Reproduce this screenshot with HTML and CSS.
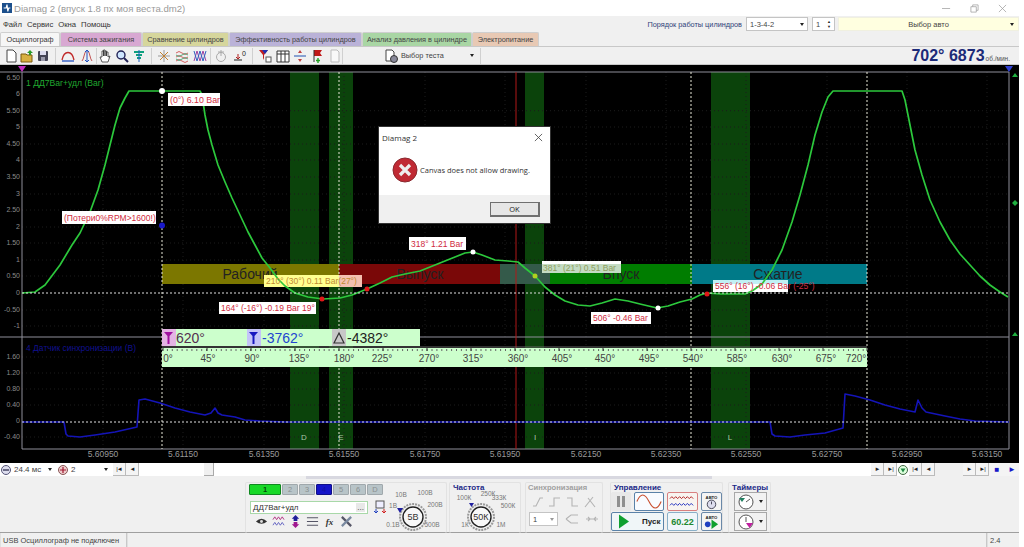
FILE: index.html
```html
<!DOCTYPE html>
<html lang="ru">
<head>
<meta charset="utf-8">
<title>Diamag 2</title>
<link rel="stylesheet" href="styles.css">
</head>
<body>
<div class="app">
  <header class="titlebar">
    <svg class="appicon" viewBox="0 0 12 12"><rect width="12" height="12" fill="#1c4f8c"/><path d="M2 6h3l1-4 1 8 1-4h2" fill="none" stroke="#fff" stroke-width="1.4"/></svg>
    <span class="title">Diamag 2 (впуск 1.8 пх моя веста.dm2)</span>
    <div class="winbtns">
      <svg viewBox="0 0 10 10"><path d="M0 5h9" class="wb"/></svg>
      <svg viewBox="0 0 10 10"><path d="M1 3h6v6H1zM3 3V1h6v6H7" class="wb"/></svg>
      <svg viewBox="0 0 10 10"><path d="M1 1l8 8M9 1l-8 8" class="wb"/></svg>
    </div>
  </header>

  <div class="menurow">
    <nav class="menu"><span>Файл</span><span>Сервис</span><span>Окна</span><span>Помощь</span></nav>
    <div class="orderbox">
      <span class="orderlabel">Порядок работы цилиндров</span>
      <div class="sel sel-order"><span>1-3-4-2</span><i class="arr"></i></div>
      <div class="sel sel-spin"><span>1</span><b class="spin">▲<br>▼</b></div>
      <div class="sel sel-auto"><span>Выбор авто</span><i class="arr"></i></div>
    </div>
  </div>

  <div class="tabs">
    <div class="tab tab-osc">Осциллограф</div>
    <div class="tab tab-ign">Система зажигания</div>
    <div class="tab tab-cmp">Сравнение цилиндров</div>
    <div class="tab tab-eff">Эффективность работы цилиндров</div>
    <div class="tab tab-prs">Анализ давления в цилиндре</div>
    <div class="tab tab-pwr">Электропитание</div>
  </div>

  <div class="toolbar">
    <div class="tbg g2">
      <svg class="ti" viewBox="0 0 14 14"><path d="M3 1h6l3 3v9H3z" fill="#fff" stroke="#444"/></svg>
      <svg class="ti" viewBox="0 0 14 14"><path d="M1 5h5l1 1h5v7H1z" fill="#d8b040" stroke="#7a5a10"/><path d="M7 4l3-3 3 3h-2v2H9V4z" fill="#2a9a2a"/></svg>
      <svg class="ti" viewBox="0 0 14 14"><rect x="2" y="2" width="10" height="10" fill="#445" rx="1"/><rect x="4" y="2" width="6" height="4" fill="#dde"/><rect x="5" y="8" width="4" height="4" fill="#99a"/></svg>
    </div>
    <i class="sep"></i>
    <div class="tbg g5">
      <svg class="ti" viewBox="0 0 14 14"><path d="M1 11C3 1 11 1 13 11" fill="none" stroke="#c02828" stroke-width="1.3"/><path d="M1 12h12" stroke="#2050c0" stroke-width="1.3"/></svg>
      <svg class="ti" viewBox="0 0 14 14"><path d="M2 12C4 10 4 4 6 2M12 12C10 10 10 4 8 2" fill="none" stroke="#c05050"/><path d="M7 1v12M5 3l2-2 2 2M5 11l2 2 2-2" fill="none" stroke="#2050c0"/></svg>
    </div>
    <i class="sep sep-t"></i>
    <div class="tbg g3">
      <svg class="ti" viewBox="0 0 14 14"><path d="M4 13L2 8l2 0V2h1.500v5V1H7v6V2h1.500v5-4H10v5l2-1-2 6z" fill="#fff" stroke="#333" stroke-width=".8"/></svg>
      <svg class="ti" viewBox="0 0 14 14"><circle cx="6" cy="6" r="4" fill="#cfe6ff" stroke="#225" stroke-width="1.400"/><path d="M9 9l4 4" stroke="#225" stroke-width="2"/></svg>
      <svg class="ti" viewBox="0 0 14 14"><path d="M2 3h10M4 6h6M5 9h4" stroke="#10a080" stroke-width="2"/><path d="M7 1v12" stroke="#2060c0"/></svg>
    </div>
    <i class="sep"></i>
    <div class="tbg g4">
      <svg class="ti" viewBox="0 0 14 14"><path d="M7 1v12M1 7h12" stroke="#999"/><path d="M3 3l8 8M11 3l-8 8" stroke="#c08030"/></svg>
      <svg class="ti" viewBox="0 0 14 14"><path d="M1 4q3-3 6 0t6 0M1 8q3-3 6 0t6 0M1 12q3-3 6 0t6 0" fill="none" stroke="#d05050" stroke-width=".9"/><path d="M1 6q3 3 6 0t6 0M1 10q3 3 6 0t6 0" fill="none" stroke="#40a070" stroke-width=".9"/></svg>
      <svg class="ti" viewBox="0 0 14 14"><path d="M1 12L4 2l3 10 3-10 3 10" fill="none" stroke="#a040a0"/><path d="M1 2l3 10 3-10 3 10 3-10" fill="none" stroke="#3060c0"/></svg>
    </div>
    <i class="sep sep-m"></i>
    <div class="tbg g5">
      <svg class="ti" viewBox="0 0 14 14"><circle cx="7" cy="8" r="4.500" fill="none" stroke="#aaa"/><path d="M7 1v6M4 3h6" stroke="#aaa"/></svg>
      <svg class="ti" viewBox="0 0 14 14"><path d="M1 11h8" stroke="#222"/><path d="M5 5v5M3 8l2 2 2-2" fill="none" stroke="#b02020"/><text x="9" y="7" class="tz">0</text></svg>
    </div>
    <i class="sep"></i>
    <div class="tbg g3h">
      <svg class="ti" viewBox="0 0 14 14"><path d="M1 1h9L6 6v5L5 9V6z" fill="#c02020"/><path d="M4 1h6L7 5z" fill="#2030b0"/><rect x="8" y="8" width="5" height="5" fill="#fff" stroke="#555"/></svg>
      <svg class="ti" viewBox="0 0 14 14"><path d="M1 2h12v11H1zM1 5h12M5 2v11M9 2v11" fill="#fff" stroke="#333"/></svg>
      <svg class="ti" viewBox="0 0 14 14"><path d="M1 7h12" stroke="#2050b0"/><path d="M5 4h4L7 1zM5 10h4l-2 3z" fill="#c04040"/></svg>
      <svg class="ti" viewBox="0 0 14 14"><path d="M3 1h8l-2 3 2 3H3z" fill="#c01818"/><path d="M3 1v12" stroke="#333"/><path d="M7 9v5M5 11.500h4" stroke="#20a020" stroke-width="1.400"/></svg>
      <svg class="ti" viewBox="0 0 14 14"><path d="M3 1h6l2 2v10H3z" fill="#f8f8f8" stroke="#bbb"/></svg>
    </div>
    <i class="sep sep-e"></i>
    <div class="testbtn">
      <svg class="ti" viewBox="0 0 14 14"><path d="M2 1h6l2 2v9H2z" fill="#fff" stroke="#444"/><circle cx="10" cy="10" r="3.500" fill="#889" stroke="#333"/></svg>
      <span>Выбор теста</span>
      <i class="arr"></i>
    </div>
    <i class="sep sep-e"></i>
    <div class="readout"><b>702° 6873</b><small>об./мин.</small></div>
  </div>

  <svg class="chart" viewBox="0 65 1019 398" width="1019" height="398">
    <g class="bands">
      <rect x="290" y="72" width="29" height="377"/><rect x="329" y="72" width="24" height="377"/>
      <rect x="525" y="72" width="19" height="377"/><rect x="711" y="72" width="39" height="377"/>
    </g>
    <path class="grid" d="M22 110.700H1009M22 127H1009M22 144H1009M22 160H1009M22 177H1009M22 194H1009M22 210H1009M22 227H1009M22 243H1009M22 260H1009M22 276H1009M22 310H1009M22 326H1009M22 357H1009M22 373H1009M22 389H1009M22 405H1009M22 437H1009M103 72V449M183 72V449M264 72V449M344 72V449M425 72V449M505 72V449M586 72V449M666 72V449M746 72V449M827 72V449M907 72V449M987 72V449"/>

    <path class="frame" d="M0 72H1009M22 72V337M0 337H1009M22 337V449H1009M1009 72V449"/>
    <path class="marker-m" d="M18 66h8l-4 6z"/>
    <path class="marker-b" d="M1005 66h8l-4 6z"/>
    <path class="tri-g" d="M1012 77l3-4 3 4z"/>
    <path class="tri-g" d="M1015 200l3 3-3 3-3-3z"/>
    <path class="tri-g" d="M1012 336l3-4 3 4z"/>

    <g class="yl">
      <text x="20" y="80">6.50</text><text x="20" y="96">6</text><text x="20" y="113">5.50</text><text x="20" y="129">5</text><text x="20" y="146">4.50</text><text x="20" y="162">4</text><text x="20" y="179">3.50</text><text x="20" y="196">3</text><text x="20" y="212">2.50</text><text x="20" y="229">2</text><text x="20" y="245">1.50</text><text x="20" y="262">1</text><text x="20" y="278">0.50</text><text x="20" y="295">0</text><text x="20" y="312">-0.50</text><text x="20" y="328">-1</text>
      <text x="20" y="359">1.60</text><text x="20" y="375">1.20</text><text x="20" y="391">0.80</text><text x="20" y="407">0.40</text><text x="20" y="423">0</text><text x="20" y="439">-0.40</text>
    </g>
    <g class="xl">
      <text x="103" y="457">5.60950</text><text x="183" y="457">5.61150</text><text x="264" y="457">5.61350</text><text x="344" y="457">5.61550</text><text x="425" y="457">5.61750</text><text x="505" y="457">5.61950</text><text x="586" y="457">5.62150</text><text x="666" y="457">5.62350</text><text x="746" y="457">5.62550</text><text x="827" y="457">5.62750</text><text x="907" y="457">5.62950</text><text x="987" y="457">5.63150</text>
    </g>

    <text x="26" y="86" class="ch1">1 ДД7Bar+удл (Bar)</text>
    <text x="26" y="351" class="ch2">4 Датчик синхронизации (В)</text>

    <g class="tag">
      <rect x="264" y="275" width="98" height="12"/>
      <rect x="542" y="261" width="79" height="12"/>
      <rect x="713" y="280" width="75" height="12"/>
    </g>
    <g class="phases">
      <rect class="ph1" x="162" y="264" width="177" height="20"/>
      <rect class="ph2" x="339" y="264" width="161" height="20"/>
      <rect class="ph3" x="500" y="264" width="50" height="20"/>
      <rect class="ph4" x="550" y="264" width="142" height="20"/>
      <rect class="ph5" x="692" y="264" width="175" height="20"/>
      <text x="250" y="279">Рабочий</text><text x="420" y="279">Выпуск</text><text x="621" y="279">Впуск</text><text x="778" y="279">Сжатие</text>
    </g>
    <g class="tag-wash">
      <rect class="w1" x="264" y="275" width="75" height="12"/>
      <rect class="w2" x="339" y="275" width="23" height="12"/>
      <rect class="w3" x="542" y="264" width="79" height="9"/>
      <rect class="w4" x="713" y="280" width="75" height="4"/>
    </g>

    <path class="vdots" d="M162 72V449M339 72V449M691 72V449M867 72V449"/>
    <path class="redline" d="M516 72V449"/>

    <path class="curve1" d="M22 293L35 292L45 285L60 265L72 245L80 233L90 212L98 190L105 165L110 145L115 125L120 108L125 98L129 91L150 91L165 91L200 91L202 95L205 115L208 130L212 145L218 165L225 182L232 198L240 215L248 232L255 245L262 258L270 268L278 279L285 286L295 293L308 297L323 299L340 298L352 295L367 289L380 283L392 277L405 274L420 271L435 265L450 259L465 253L473 252L482 255L495 260L508 261L518 262L525 268L535 276L545 287L555 295L565 301L578 305L590 306L602 303L615 299L628 301L640 304L657 308L668 306L680 302L692 299L700 295L707 293L720 294L745 294L752 291L762 284L772 270L782 250L792 222L800 195L808 165L815 135L822 112L828 97L833 91L902 91L905 100L910 125L915 150L922 175L930 200L940 222L950 240L960 254L970 265L980 276L990 285L1000 292L1008 297"/>
    <path class="curve2" d="M22 422L64 422L66 434L68 436L80 437L95 435L115 432L137 427L139 400L145 399L160 403L175 408L190 412L205 415L211 413L215 408L218 413L222 415L235 417L245 420L260 421L285 422L770 422L772 434L775 436L790 437L805 435L825 433L843 428L845 394L855 396L870 400L885 405L900 409L915 412L918 400L922 408L926 412L945 416L960 419L975 421L1009 422"/>
    <path class="dots" d="M22 293H1009M22 422H1009"/>

    <g class="ruler">
      <rect x="162" y="329" width="258" height="17"/>
      <rect x="162" y="348" width="705" height="19"/>
      <path class="ruler-line" d="M162 347H867"/>
      <path class="ruler-ticks" d="M162 350H867"/>
      <path class="ruler-major" d="M163 351v-3M207 351v-3M251 351v-3M295 351v-3M339 351v-3M383 351v-3M427 351v-3M471 351v-3M515 351v-3M559 351v-3M603 351v-3M647 351v-3M691 351v-3M735 351v-3M779 351v-3M823 351v-3M867 351v-3"/>
      <rect class="f1" x="162" y="329" width="14" height="17"/>
      <path class="f1i" d="M164 332h9l-3.500 4v8h-2v-8z"/>
      <rect class="f2" x="247" y="329" width="14" height="17"/>
      <path class="f2i" d="M249 332h9l-3.500 4v8h-2v-8z"/>
      <rect class="f3" x="332" y="329" width="14" height="17"/>
      <path class="f3i" d="M339 333l5 10h-10z"/>
      <text x="176" y="343" class="v1">620°</text>
      <text x="262" y="343" class="v2">-3762°</text>
      <text x="347" y="343" class="v3">-4382°</text>
      <g class="deg">
        <text x="168" y="362">0°</text><text x="208" y="362">45°</text><text x="252" y="362">90°</text><text x="299" y="362">135°</text><text x="344" y="362">180°</text><text x="382" y="362">225°</text><text x="429" y="362">270°</text><text x="473" y="362">315°</text><text x="518" y="362">360°</text><text x="562" y="362">405°</text><text x="605" y="362">450°</text><text x="649" y="362">495°</text><text x="693" y="362">540°</text><text x="737" y="362">585°</text><text x="782" y="362">630°</text><text x="826" y="362">675°</text><text x="856" y="362">720°</text>
      </g>
    </g>

    <g class="bl"><text x="304" y="440">D</text><text x="341" y="440">E</text><text x="535" y="440">I</text><text x="730" y="440">L</text></g>

    <g class="tag">
      <rect x="168" y="93" width="52" height="13"/><text x="170" y="103" class="tag-l">(0°) 6.10 Bar</text>
      <rect x="62" y="211" width="94" height="13"/><text x="64" y="221">(Потери0%RPM&gt;1600!)</text>
      <rect x="409" y="237" width="57" height="13"/><text x="411" y="247">318° 1.21 Bar</text>
      <rect x="219" y="302" width="97" height="12"/><text x="221" y="311">164° (-16°) -0.19 Bar 19°</text>
      <rect x="591" y="312" width="60" height="12"/><text x="593" y="321">506° -0.46 Bar</text>
      <text x="266" y="284" class="tag-o">210° (30°) 0.11 Bar(27°)</text>
      <text x="543" y="271" class="tag-g">381° (21°) 0.51 Bar</text>
      <text x="715" y="289">556° (16°) -0.06 Bar (-25°)</text>
    </g>

    <circle class="dw" cx="162" cy="91" r="3"/><circle class="db" cx="162" cy="225.500" r="3"/>
    <circle class="dw" cx="473" cy="252" r="2.500"/><circle class="dw" cx="658" cy="308" r="2.500"/>
    <circle class="dr" cx="322" cy="299" r="2.500"/><circle class="dr" cx="367" cy="289" r="2.500"/><circle class="dr" cx="707" cy="294" r="2.500"/>
    <circle class="dy" cx="535" cy="276" r="2.500"/>
  </svg>

  <div class="navrow">
    <div class="navleft">
      <svg class="zi" viewBox="0 0 10 10"><circle cx="5" cy="5" r="4.500" fill="#dde" stroke="#557"/><path d="M2 5h6" stroke="#224" stroke-width="1.200"/></svg>
      <div class="navsel w-a"><span>24.4 мс</span><i class="arr"></i></div>
      <svg class="zi" viewBox="0 0 10 10"><circle cx="5" cy="5" r="4.500" fill="#ecc" stroke="#855"/><path d="M2 5h6M5 2v6" stroke="#a01830" stroke-width="1.200"/></svg>
      <div class="navsel w-b"><span>2</span><i class="arr"></i></div>
      <i class="nb">|◄</i><i class="nb">◄</i>
    </div>
    <div class="track"><div class="thumb"></div></div>
    <div class="navright">
      <i class="nb">►</i><i class="nb">►|</i>
      <svg class="zi" viewBox="0 0 10 10"><circle cx="5" cy="5" r="4.500" fill="#dfd" stroke="#464"/><path d="M2.500 3.500h5L5 7.500z" fill="#284"/></svg>
      <i class="nb">|◄</i><i class="nb">◄</i>
      <span class="gap"></span>
      <i class="nb">►</i><i class="nb">►|</i>
      <i class="nb nb-blue">■</i><i class="nb nb-blue">►</i>
    </div>
  </div>

  <section class="panel">
    <div class="splitter"><i class="dotbar"></i></div>
    <div class="groups">
      <div class="grp grp-ch">
        <div class="chleft">
          <div class="cyls">
            <span class="cy cy-1">1</span><span class="cy">2</span><span class="cy">3</span><span class="cy cy-4">4</span><span class="cy">5</span><span class="cy">6</span><span class="cy">D</span>
          </div>
          <div class="inrow">
            <div class="inp"><span>ДД7Bar+удл</span><em>...</em></div>
            <svg class="ti" viewBox="0 0 14 14"><rect x="3" y="1" width="8" height="7" fill="#eef" stroke="#555"/><path d="M3 9v4M1 11l2 2 2-2" fill="none" stroke="#2040c0"/><path d="M11 9v4M9 11l2 2 2-2" fill="none" stroke="#d02020"/></svg>
          </div>
          <div class="chicons">
            <svg class="ci" viewBox="0 0 14 14"><path d="M1 7q6-6 12 0-6 5-12 0z" fill="#333"/><circle cx="7" cy="7" r="1.600" fill="#ddd"/></svg>
            <svg class="ci" viewBox="0 0 14 14"><path d="M1 5l2-3 2 3 2-3 2 3 2-3 2 3" fill="none" stroke="#b03080"/><path d="M1 11l2-3 2 3 2-3 2 3 2-3 2 3" fill="none" stroke="#6060c0"/></svg>
            <svg class="ci" viewBox="0 0 14 14"><path d="M7 0l4 4H9v2.500H5V4H3z" fill="#20209a"/><path d="M7 14l4-4H9V7.500H5V10H3z" fill="#a01890"/></svg>
            <svg class="ci" viewBox="0 0 14 14"><path d="M1 3h12M1 7h12M1 11h12" stroke="#556" stroke-width="1.200"/></svg>
            <span class="fx">fx</span>
            <svg class="ci" viewBox="0 0 14 14"><path d="M2 2l10 10" stroke="#556" stroke-width="2.400"/><path d="M12 2L2 12" stroke="#7a8aa0" stroke-width="2.400"/></svg>
          </div>
        </div>
        <svg class="knob" viewBox="0 0 60 46">
          <text x="13" y="9">10В</text><text x="37" y="7">100В</text><text x="5" y="20">1В</text><text x="47" y="19">200В</text><text x="5" y="39">0.1В</text><text x="44" y="39">500В</text>
          <circle class="k-o" cx="25" cy="29" r="13"/><circle class="k-i" cx="25" cy="29" r="10"/>
          <path class="k-m" d="M9 20l6 0-3 5z"/>
          <text x="25" y="32" class="k-v">5В</text>
        </svg>
      </div>

      <div class="grp grp-f">
        <div class="gt">Частота</div>
        <svg class="knob knob-f" viewBox="0 0 70 40">
          <text x="13" y="13">100К</text><text x="37" y="9">250К</text><text x="48" y="13">333К</text><text x="57" y="21">500К</text><text x="14" y="40">1К</text><text x="50" y="40">1М</text>
          <circle class="k-o" cx="30" cy="30" r="13"/><circle class="k-i" cx="30" cy="30" r="10"/>
          <path class="k-m" d="M18 16l5 0-2.500 4z"/>
          <text x="30" y="33" class="k-v">50К</text>
        </svg>
      </div>

      <div class="grp grp-s">
        <div class="gt gt-off">Синхронизация</div>
        <div class="sync-a">
          <svg class="si" viewBox="0 0 14 14"><path d="M2 11h3l4-8h3" class="off"/></svg>
          <svg class="si" viewBox="0 0 14 14"><path d="M1 11h5V3h6" class="off"/></svg>
          <svg class="si" viewBox="0 0 14 14"><path d="M1 3h5v8h6" class="off"/></svg>
          <svg class="si" viewBox="0 0 14 14"><path d="M2 12L10 2M5 3l7 9" class="off"/></svg>
        </div>
        <div class="sync-b">
          <div class="sel sel-s"><span>1</span><i class="arr"></i></div>
          <svg class="si" viewBox="0 0 14 14"><path d="M1 7l5-4h7M1 7l5 4h7" class="off"/></svg>
          <svg class="si" viewBox="0 0 14 14"><path d="M1 7h12M3 5l2 2-2 2M11 5L9 7l2 2" class="off"/></svg>
        </div>
      </div>

      <div class="grp grp-u">
        <div class="gt">Управление</div>
        <div class="u-grid">
          <div class="ub ub-pause"><i></i><i></i></div>
          <div class="ub ub-blue">
            <svg viewBox="0 0 30 16"><path d="M2 8q6-14 13 0t13 0" fill="none" stroke="#c85030" stroke-width="1.200"/></svg>
          </div>
          <div class="ub ub-red">
            <svg viewBox="0 0 30 16"><path d="M2 5l2-2 2 2 2-2 2 2 2-2 2 2 2-2 2 2 2-2 2 2 2-2 2 2" fill="none" stroke="#b02020"/><path d="M2 12l2-2 2 2 2-2 2 2 2-2 2 2 2-2 2 2 2-2 2 2 2-2 2 2" fill="none" stroke="#2030c0"/></svg>
          </div>
          <div class="ub ub-auto">
            <svg viewBox="0 0 20 18"><text x="10" y="6" class="autot">АВТО</text><circle cx="10" cy="12" r="4.500" fill="#dde" stroke="#445"/><path d="M10 12V9" stroke="#445"/></svg>
          </div>
          <div class="ub ub-run"><svg viewBox="0 0 14 16"><path d="M2 1l10 7-10 7z" fill="#10a030"/></svg><b>Пуск</b></div>
          <div class="ub ub-num">60.22</div>
          <div class="ub ub-auto">
            <svg viewBox="0 0 20 18"><text x="10" y="6" class="autot">АВТО</text><path d="M10 7l7 5-7 5z" fill="#10a030"/><circle cx="6" cy="12" r="3" fill="#2040c0"/></svg>
          </div>
        </div>
      </div>

      <div class="grp grp-t">
        <div class="gt">Таймеры</div>
        <div class="tb-btn">
          <svg viewBox="0 0 18 16"><circle cx="9" cy="8" r="7" fill="#fff" stroke="#555"/><path d="M2 4h6l-3 4z" fill="#208060"/><path d="M9 8l4-3" stroke="#555"/></svg><i class="arr"></i>
        </div>
        <div class="tb-btn">
          <svg viewBox="0 0 18 16"><circle cx="9" cy="8" r="7" fill="#fff" stroke="#555"/><path d="M9 8V3" stroke="#555"/><path d="M9 9h7l-3.500 5z" fill="#c020a0"/></svg><i class="arr"></i>
        </div>
      </div>
    </div>
  </section>

  <footer class="status">
    <span class="st st-a">USB Осциллограф не подключен</span>
    <span class="st st-b"></span>
    <span class="st st-c">2.4</span>
  </footer>

  <div class="dialog">
    <div class="dlg-head"><span>Diamag 2</span><svg viewBox="0 0 10 10"><path d="M1 1l8 8M9 1l-8 8" class="dx"/></svg></div>
    <div class="dlg-body">
      <svg viewBox="0 0 26 26"><circle cx="13" cy="13" r="12" fill="#c02a34" stroke="#8a2a30"/><path d="M8 8l10 10M18 8L8 18" stroke="#eee" stroke-width="3.200"/></svg>
      <span>Canvas does not allow drawing.</span>
    </div>
    <div class="dlg-foot"><button class="okbtn" type="button">OK</button></div>
  </div>
</div>
</body>
</html>
```
FILE: styles.css
```css
* { box-sizing: border-box; }
html, body { margin: 0; padding: 0; background: #fff; overflow: hidden; }
body { font-family: "Liberation Sans", Arial, sans-serif; font-size: 7.5px; color: #333; }
.app { position: relative; width: 1019px; height: 547px; background: #f0f0f0; }

/* title bar */
.titlebar { height: 16px; background: #fff; display: flex; align-items: center; padding-left: 2px; }
.appicon { width: 10px; height: 10px; }
.title { margin-left: 2px; font-size: 9.600px; color: #9a9a9a; white-space: nowrap; }
.winbtns { margin-left: auto; display: flex; gap: 19px; padding-right: 12px; }
.winbtns svg { width: 9px; height: 9px; }
.wb { fill: none; stroke: #9a9a9a; stroke-width: .8; }

/* menu + order row */
.menurow { height: 16px; display: flex; justify-content: space-between; align-items: center; }
.menu { display: flex; gap: 5px; padding-left: 3px; font-size: 7.700px; color: #333; }
.orderbox { display: flex; align-items: center; }
.orderlabel { font-size: 7.300px; color: #2f3f78; margin-right: 4px; white-space: nowrap; }
.sel { height: 14px; background: #fff; border: 1px solid #c4c4c4; display: flex; align-items: center; font-size: 7.500px; color: #444; padding: 0 3px; position: relative; }
.sel-order { width: 62px; justify-content: space-between; }
.sel-spin { width: 23px; margin-left: 4px; justify-content: space-between; }
.spin { font-size: 4px; line-height: 5px; font-weight: 400; color: #222; }
.sel-auto { width: 181px; margin-left: 3px; background: #ffffe0; border-color: #f0f0e0; justify-content: center; }
.sel-auto .arr { position: absolute; right: 4px; top: 5px; }
.arr { display: inline-block; width: 0; height: 0; border-left: 2.500px solid transparent; border-right: 2.500px solid transparent; border-top: 3px solid #222; }

/* tabs */
.tabs { height: 14px; display: flex; align-items: stretch; }
.tab { display: flex; align-items: center; justify-content: center; font-size: 7.300px; color: #444; border: 1px solid #cfcfcf; border-bottom: 0; border-radius: 2px 2px 0 0; white-space: nowrap; }
.tab-osc { width: 60px; background: #f6f6f6; color: #333; }
.tab-ign { width: 82px; background: #d8a8d2; }
.tab-cmp { width: 87px; background: #d6d69c; }
.tab-eff { width: 133px; background: #bab2d8; }
.tab-prs { width: 110px; background: #a9d6a4; }
.tab-pwr { width: 67px; background: #e8c9b4; }

/* toolbar */
.toolbar { height: 19px; display: flex; align-items: center; padding-left: 4px; border-top: 1px solid #c8c8c8; border-bottom: 1px solid #c8c8c8; }
.tbg { display: flex; align-items: center; }
.g2 { gap: 2px; }
.g5 { gap: 5px; }
.g3 { gap: 3px; }
.g4 { gap: 4px; }
.g3h { gap: 3.500px; }
.ti { width: 14px; height: 14px; flex: none; }
.tz { font-size: 7px; fill: #222; }
.sep { width: 1px; height: 16px; background: #d0d0d0; margin: 0 5px; }
.sep-t { margin: 0 1.500px; }
.sep-m { margin: 0 3px; }
.sep-e { margin: 0; }
.testbtn { width: 132px; display: flex; align-items: center; padding-left: 36px; margin-left: 5px; font-size: 7.300px; color: #444; }
.testbtn span { margin-left: 3px; }
.testbtn .arr { margin-left: auto; margin-right: 6px; }
.readout { margin-left: auto; padding-right: 9px; display: flex; align-items: baseline; gap: 1px; color: #1c2a78; }
.readout b { font-size: 16px; }
.readout small { font-size: 6.500px; color: #555; }

/* chart */
.chart { display: block; background: #000; font-family: "Liberation Sans", Arial, sans-serif; }
.bands rect { fill: #0b430b; }
.grid { stroke: #1c1c1c; stroke-width: 1; stroke-dasharray: 1 3; fill: none; }
.frame { stroke: #8f8f9a; fill: none; stroke-width: 1; }
.marker-m { fill: #c030c0; }
.marker-b { fill: #3040d0; }
.tri-g { fill: #20b040; }
.yl text { fill: #8a8a8a; font-size: 7px; text-anchor: end; }
.xl text { fill: #9a9a9a; font-size: 8.500px; text-anchor: middle; }
.ch1 { fill: #20a830; font-size: 8.600px; }
.ch2 { fill: #101090; font-size: 8.500px; }
.ph1 { fill: #7c7700; }
.ph2 { fill: #7a0808; }
.ph3 { fill: #345a4a; }
.ph4 { fill: #007d00; }
.ph5 { fill: #007a88; }
.phases text { fill: #222; font-size: 14px; text-anchor: middle; }
.dots { stroke: #e0e0e0; stroke-dasharray: 2 2; fill: none; }
.vdots { stroke: #e8e8d8; stroke-dasharray: 2 2; fill: none; }
.redline { stroke: #b01818; fill: none; }
.curve1 { stroke: #2cc83c; stroke-width: 1.700; fill: none; stroke-linejoin: round; }
.curve2 { stroke: #1414b8; stroke-width: 1.600; fill: none; stroke-linejoin: round; }
.ruler rect { fill: #ccffcc; }
.ruler-line { stroke: #666; fill: none; }
.ruler-ticks { stroke: #666; stroke-width: 2; stroke-dasharray: 1 3.900; fill: none; }
.ruler-major { stroke: #333; fill: none; }
.ruler .f1 { fill: #e4b4e4; }
.ruler .f2 { fill: #c4c4f8; }
.ruler .f3 { fill: #c8c8c8; }
.f1i { fill: #a010a0; }
.f2i { fill: #1818c0; }
.f3i { fill: none; stroke: #333; stroke-width: 1.200; }
.v1 { fill: #553050; font-size: 14px; }
.v2 { fill: #2244d0; font-size: 14px; }
.v3 { fill: #222; font-size: 14px; }
.deg text { fill: #444; font-size: 10px; text-anchor: middle; }
.bl text { fill: #a8c8a8; font-size: 8px; text-anchor: middle; }
.tag rect { fill: #fff; }
.tag text { fill: #d02a40; font-size: 8.500px; }
.tag .tag-l { font-size: 8.800px; }
.tag .tag-o { fill: #c08a30; }
.tag .tag-g { fill: #90a060; }
.w1 { fill: #ffff90; }
.w2 { fill: #f4c0b0; }
.w3 { fill: #c4dcc4; }
.w4 { fill: #c0f0f4; }
.dw { fill: #fff; }
.db { fill: #1818c8; }
.dr { fill: #e01818; }
.dy { fill: #b0d020; }

/* nav row */
.navrow { height: 13px; display: flex; align-items: center; background: #f0f0f0; }
.navleft, .navright { display: flex; align-items: center; height: 13px; background: #fff; }
.zi { width: 10px; height: 10px; margin: 0 1px; flex: none; }
.navsel { display: flex; align-items: center; justify-content: space-between; font-size: 8px; color: #444; background: #fff; padding: 0 5px 0 2px; white-space: nowrap; }
.w-a { width: 45px; }
.w-b { width: 44px; }
.nb { width: 13px; height: 13px; display: flex; align-items: center; justify-content: center; font-style: normal; font-size: 6px; letter-spacing: -1px; color: #222; background: #f4f4f4; border-right: 1px solid #bbb; border-bottom: 1px solid #bbb; }
.nb-blue { color: #1818c8; border: 0; width: 15px; font-size: 8px; }
.track { flex: 1; height: 13px; background: #fff; padding-left: 65px; }
.thumb { width: 10px; height: 13px; border-right: 1px solid #aaa; border-bottom: 1px solid #aaa; background: #f0f0f0; }
.gap { width: 28px; height: 13px; background: #f0f0f0; }

/* bottom panel */
.panel { height: 57px; border-bottom: 1px solid #9f9f9f; }
.splitter { height: 3px; padding-left: 306px; }
.dotbar { display: block; width: 406px; height: 3px; background: #d8d8e0; }
.groups { display: flex; padding-left: 245px; height: 54px; }
.grp { border: 1px solid #e2e2e2; border-bottom: 0; border-radius: 2px; margin-top: 3px; position: relative; }
.gt { position: absolute; top: 0; left: 3px; font-size: 8px; font-weight: 700; color: #1c2a88; line-height: 9px; white-space: nowrap; }
.gt-off { color: #a0a0a0; font-size: 7.600px; left: 2px; }
.grp-ch { width: 202px; display: flex; padding-left: 3px; }
.chleft { width: 140px; padding-top: 1px; flex: none; }
.cyls { display: flex; gap: 1px; height: 11px; }
.cy { width: 16px; background: #b8c4c8; border: 1px solid #a0a8ac; color: #8a9090; font-size: 7.500px; display: flex; align-items: center; justify-content: center; border-radius: 1px; }
.cy-1 { width: 32px; background: #18d828; color: #044a08; font-weight: 700; border-color: #108820; }
.cy-4 { background: #1414c8; color: #1010a0; border-color: #101088; }
.inrow { display: flex; align-items: center; gap: 5px; margin-top: 5px; height: 14px; }
.inp { width: 118px; height: 13px; margin-left: 1px; background: #fff; border: 1px solid #a8d8a8; font-size: 8px; color: #333; display: flex; justify-content: space-between; align-items: center; padding: 0 2px; white-space: nowrap; }
.inp em { font-style: normal; background: #e8e8e8; padding: 0 1px; line-height: 9px; }
.chicons { display: flex; align-items: center; gap: 4px; margin-top: 1px; padding-left: 6px; }
.ci { width: 13px; height: 13px; }
.fx { font-family: "Liberation Serif", serif; font-style: italic; font-weight: 700; font-size: 9px; color: #333; width: 13px; text-align: center; }
.knob { width: 60px; height: 46px; margin-top: 5px; margin-left: -1px; flex: none; font-size: 6.500px; overflow: visible; }
.knob-f { width: 70px; height: 40px; margin: 4px 0 0 1px; display: block; }
.knob text { fill: #777; text-anchor: middle; }
.knob .k-v { fill: #333; font-size: 9px; }
.k-o { fill: none; stroke: #999; stroke-width: 2; stroke-dasharray: 2 1; }
.k-i { fill: #f8f8f8; stroke: #222; stroke-width: 1.400; }
.k-m { fill: #2020a0; }
.grp-f { width: 72px; margin-left: 2px; }
.grp-s { width: 78px; margin-left: 4px; padding: 12px 3px 0 3px; }
.sync-a { display: flex; justify-content: space-around; }
.sync-b { display: flex; align-items: center; justify-content: space-between; margin-top: 3px; }
.si { width: 14px; height: 14px; }
.off { fill: none; stroke: #b4b4b4; stroke-width: 1.100; }
.sel-s { width: 29px; height: 14px; justify-content: space-between; }
.sel-s .arr { border-top-color: #999; }
.grp-u { width: 113px; margin-left: 7px; padding: 9px 0 0 0; }
.u-grid { display: grid; grid-template-columns: 20px 30px 31px 21px; grid-template-rows: 19px 19px; gap: 1px 3px; width: 111px; }
.ub { border-radius: 2px; border: 1px solid #aab; display: flex; align-items: center; justify-content: center; background: #f4f4f4; }
.ub svg { width: 100%; height: 100%; }
.ub-pause { gap: 2px; border-color: #e8e8e8; background: #e8e8e8; }
.ub-pause i { display: block; width: 3px; height: 11px; background: #8f8f8f; }
.ub-blue { border-color: #5a82a8; background: #f8fbff; }
.ub-red { border-color: #d88080; background: #f8f4f0; }
.ub-auto { border-color: #6a88a8; }
.ub-run { grid-column: 1 / 3; border-color: #5a82a8; justify-content: flex-start; background: #f0f6f8; }
.ub-run svg { width: 14px; flex: none; margin-left: 5px; }
.ub-run b { margin-left: 11px; font-size: 8px; color: #222; }
.ub-num { font-size: 9px; font-weight: 700; color: #208830; border-color: #8ab0c8; background: #f0f6fa; }
.autot { font-size: 4.500px; font-weight: 700; fill: #222; text-anchor: middle; }
.grp-t { width: 43px; margin-left: 5px; padding: 9px 0 0 5px; }
.tb-btn { width: 33px; height: 19px; border: 1px solid #a8a8a8; background: #f2f2f2; display: flex; align-items: center; justify-content: space-between; padding: 0 3px 0 2px; margin-bottom: 1px; }
.tb-btn svg { width: 18px; height: 16px; }

/* status */
.status { height: 14px; display: flex; font-size: 7.500px; color: #444; }
.st { display: flex; align-items: center; padding-left: 2px; border-right: 1px solid #c8c8c8; border-left: 1px solid #e0e0e0; white-space: nowrap; }
.st-a { width: 127px; }
.st-b { flex: 1; }
.st-c { width: 32px; border-right: 0; }

/* dialog */
.dialog { position: absolute; left: 379px; top: 127px; width: 171px; height: 96px; background: #fff; display: flex; flex-direction: column; box-shadow: 0 0 0 1px #333; }
.dlg-head { height: 21px; display: flex; align-items: center; justify-content: space-between; padding: 0 7px 0 3px; font-family: "Open Sans", sans-serif; font-size: 8px; color: #333; }
.dlg-head svg { width: 9px; height: 9px; }
.dx { stroke: #444; stroke-width: .9; fill: none; }
.dlg-body { height: 47px; display: flex; align-items: center; padding: 0 0 4px 13px; gap: 2px; font-family: "Open Sans", sans-serif; font-size: 7.500px; color: #333; }
.dlg-body svg { width: 26px; height: 26px; flex: none; }
.dlg-foot { flex: 1; background: #f0f0f0; display: flex; justify-content: flex-end; align-items: center; padding-right: 10px; }
.okbtn { width: 50px; height: 15px; padding: 0; background: #e6e6e6; border: 1px solid #707070; border-right-width: 2px; border-bottom-width: 2px; font-family: "Open Sans", sans-serif; font-size: 7.500px; color: #222; }
```
